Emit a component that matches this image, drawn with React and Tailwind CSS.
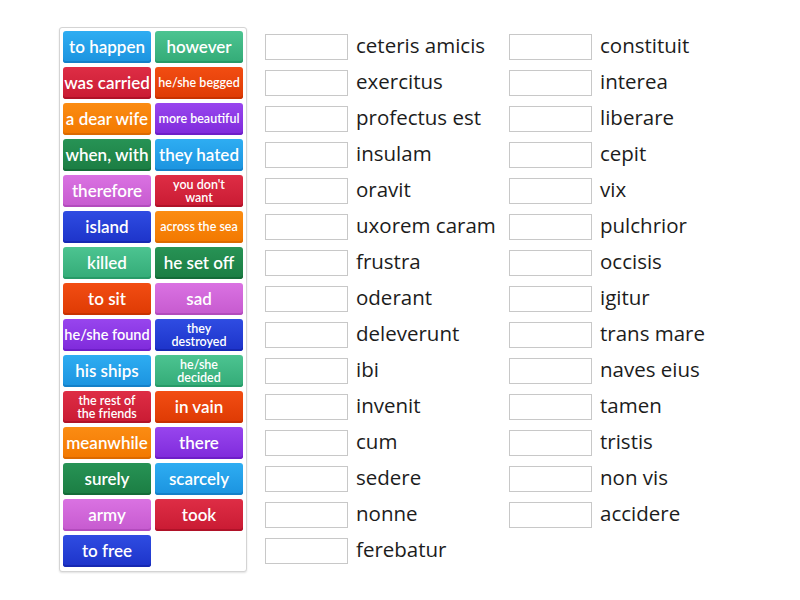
import React from "react";

const C = {
  blue: "bg-linear-to-b from-[#2eadf2] to-[#1b93df] shadow-[inset_0_-2px_0_#1480c8]",
  green: "bg-linear-to-b from-[#4cc491] to-[#33ab77] shadow-[inset_0_-2px_0_#279a67]",
  red: "bg-linear-to-b from-[#de2d45] to-[#c91a33] shadow-[inset_0_-2px_0_#b01228]",
  orred: "bg-linear-to-b from-[#f24d12] to-[#de3a04] shadow-[inset_0_-2px_0_#c83200]",
  orange: "bg-linear-to-b from-[#fb8c12] to-[#f27800] shadow-[inset_0_-2px_0_#dc6a00]",
  purple: "bg-linear-to-b from-[#9845ee] to-[#7f29db] shadow-[inset_0_-2px_0_#6e1ec8]",
  dgreen: "bg-linear-to-b from-[#279355] to-[#1b7d43] shadow-[inset_0_-2px_0_#146c38]",
  pink: "bg-linear-to-b from-[#da72e2] to-[#c65acf] shadow-[inset_0_-2px_0_#b34bbd]",
  dblue: "bg-linear-to-b from-[#2f4ce2] to-[#1d33c9] shadow-[inset_0_-2px_0_#1628b2]",
};

const tiles = [
  ["to happen", "blue", "lg"], ["however", "green", "lg"],
  ["was carried", "red", "lg"], ["he/she begged", "orred", "sm"],
  ["a dear wife", "orange", "lg"], ["more beautiful", "purple", "sm"],
  ["when, with", "dgreen", "lg"], ["they hated", "blue", "lg"],
  ["therefore", "pink", "lg"], ["you don't\nwant", "red", "xs"],
  ["island", "dblue", "lg"], ["across the sea", "orange", "sm"],
  ["killed", "green", "lg"], ["he set off", "dgreen", "lg"],
  ["to sit", "orred", "lg"], ["sad", "pink", "lg"],
  ["he/she found", "purple", "md"], ["they\ndestroyed", "dblue", "xs"],
  ["his ships", "blue", "lg"], ["he/she\ndecided", "green", "xs"],
  ["the rest of\nthe friends", "red", "xs"], ["in vain", "orred", "lg"],
  ["meanwhile", "orange", "lg"], ["there", "purple", "lg"],
  ["surely", "dgreen", "lg"], ["scarcely", "blue", "lg"],
  ["army", "pink", "lg"], ["took", "red", "lg"],
  ["to free", "dblue", "lg"],
];

const sizes = {
  lg: "text-[17px] leading-[18px]",
  md: "text-[14.5px] leading-[16px]",
  sm: "text-[12.5px] leading-[14px]",
  xs: "text-[12.5px] leading-[13px]",
};

const col1 = [
  "ceteris amicis", "exercitus", "profectus est", "insulam", "oravit",
  "uxorem caram", "frustra", "oderant", "deleverunt", "ibi", "invenit",
  "cum", "sedere", "nonne", "ferebatur",
];
const col2 = [
  "constituit", "interea", "liberare", "cepit", "vix", "pulchrior",
  "occisis", "igitur", "trans mare", "naves eius", "tamen", "tristis",
  "non vis", "accidere",
];

function Row({ text }) {
  return (
    <div className="flex h-[36px] items-center">
      <div className="h-[26px] w-[83px] shrink-0 border border-[#c8c8c8] bg-white" />
      <span
        className="ml-[8px] -mt-[3px] text-[20.5px] leading-none text-[#1c1c1c] whitespace-nowrap"
        style={{ fontFamily: "'Open Sans', sans-serif" }}
      >
        {text}
      </span>
    </div>
  );
}

export default function App() {
  return (
    <div
      className="flex w-[800px] h-[600px] bg-white pl-[59px] pt-[27px]"
      style={{ fontFamily: "Lato, 'Open Sans', sans-serif" }}
    >
      <div className="h-[545px] w-[188px] shrink-0 rounded-[3px] border border-[#d4d4d4] bg-white p-[3px] shadow-[0_1px_2px_rgba(0,0,0,0.12)]">
        <div className="grid grid-cols-[88px_88px] gap-[4px]">
          {tiles.map(([t, c, s], i) => (
            <div
              key={i}
              className={`flex h-[32px] items-center justify-center rounded-[3px] text-center font-semibold text-white whitespace-pre-line ${C[c]} ${sizes[s]}`}
            >
              {t}
            </div>
          ))}
        </div>
      </div>
      <div className="ml-[18px] mt-[2px] flex">
        <div className="flex w-[244px] flex-col">
          {col1.map((t) => (
            <Row key={t} text={t} />
          ))}
        </div>
        <div className="flex flex-col">
          {col2.map((t) => (
            <Row key={t} text={t} />
          ))}
        </div>
      </div>
    </div>
  );
}
